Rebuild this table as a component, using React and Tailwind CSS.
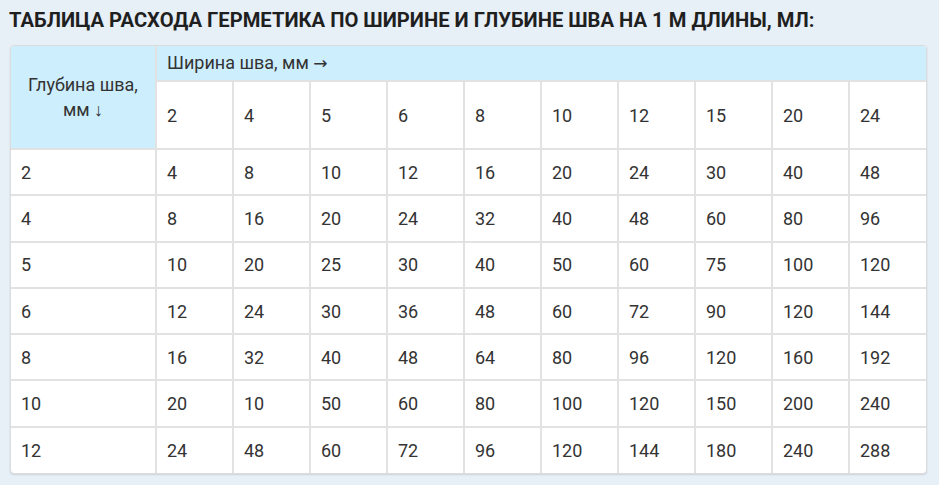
const widths = [2, 4, 5, 6, 8, 10, 12, 15, 20, 24];

const rows = [
  [2, 4, 8, 10, 12, 16, 20, 24, 30, 40, 48],
  [4, 8, 16, 20, 24, 32, 40, 48, 60, 80, 96],
  [5, 10, 20, 25, 30, 40, 50, 60, 75, 100, 120],
  [6, 12, 24, 30, 36, 48, 60, 72, 90, 120, 144],
  [8, 16, 32, 40, 48, 64, 80, 96, 120, 160, 192],
  [10, 20, 10, 50, 60, 80, 100, 120, 150, 200, 240],
  [12, 24, 48, 60, 72, 96, 120, 144, 180, 240, 288],
];

export default function App() {
  return (
    <div className="w-[939px] h-[485px] bg-[#e7eff7] text-[#333] font-['Roboto',sans-serif] pl-[10px] pr-[12px] pt-[8px]">
      <h2 className="text-[20.2px] font-bold leading-[24px] text-[#1f1f1f] uppercase -ml-[1px] mb-[13px]">
        Таблица расхода герметика по ширине и глубине шва на 1 м длины, мл:
      </h2>
      <div className="w-[917px] rounded-[4px] overflow-hidden border border-[#dcdcdc] shadow-[0_1px_2px_rgba(0,0,0,0.12)] bg-white">
        <table className="w-full border-collapse table-fixed text-[18px] leading-[25px]">
          <colgroup>
            <col className="w-[145px]" />
            {widths.map((w) => (
              <col key={w} />
            ))}
          </colgroup>
          <thead>
            <tr className="h-[35px] bg-[#cdeefd]">
              <th
                rowSpan={2}
                className="border-r-2 border-b-2 border-[#e2e2e2] font-normal text-center px-[10px]"
              >
                Глубина шва, мм ↓
              </th>
              <th colSpan={10} className="border-b-2 border-[#e2e2e2] font-normal text-left px-[10px]">
                Ширина шва, мм{' '}
                <span className="font-['DejaVu_Sans',sans-serif] text-[17px]">→</span>
              </th>
            </tr>
            <tr className="h-[68px]">
              {widths.map((w, i) => (
                <td
                  key={w}
                  className={`bg-white px-[10px] border-b-2 border-[#e2e2e2] ${i < widths.length - 1 ? 'border-r-2' : ''}`}
                >
                  {w}
                </td>
              ))}
            </tr>
          </thead>
          <tbody>
            {rows.map((row, ri) => (
              <tr key={ri} className="h-[46.3px]">
                {row.map((v, ci) => (
                  <td
                    key={ci}
                    className={`px-[10px] border-[#e2e2e2] ${ci < row.length - 1 ? 'border-r-2' : ''} ${ri < rows.length - 1 ? 'border-b-2' : ''}`}
                  >
                    {v}
                  </td>
                ))}
              </tr>
            ))}
          </tbody>
        </table>
      </div>
    </div>
  );
}
